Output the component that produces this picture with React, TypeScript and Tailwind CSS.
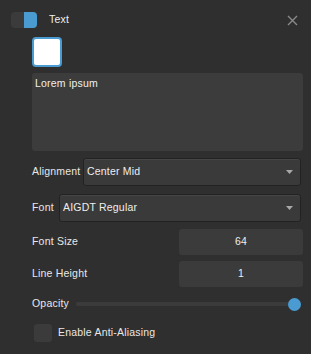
import React from 'react';

function Select({ value }: { value: string }) {
  return (
    <div className="flex-1 h-[28px] flex items-center justify-between pl-[3px] pr-[7px] bg-[#3a3a3a] border border-[#222] rounded-[3px] shadow-[inset_0_1px_0_#454545]">
      <span className="text-[10.5px] text-[#eee]">{value}</span>
      <svg width="7" height="4" viewBox="0 0 7 4">
        <path d="M0 0H7L3.5 4Z" fill="#a8a8a8" />
      </svg>
    </div>
  );
}

function NumberRow({ label, value }: { label: string; value: string }) {
  return (
    <div className="flex items-center h-[26px]">
      <span className="flex-1 text-[10.5px] text-[#e8e8e8]">{label}</span>
      <div className="w-[124px] h-full bg-[#3b3b3b] rounded-[3px] flex items-center justify-center text-[10.5px] text-[#eee]">
        {value}
      </div>
    </div>
  );
}

export default function App() {
  return (
    <div className="w-[311px] h-[354px] bg-[#2f2f2f] overflow-hidden font-['Liberation_Sans',Arial,sans-serif] tracking-[0.2px] select-none">
      <div className="flex items-center h-[16px] mt-[12px] pl-[11px] pr-[13px]">
        <div className="w-[26px] h-[16px] rounded-[4px] bg-[#3b3b3b] flex justify-end">
          <div className="w-[13px] h-full rounded-r-[4px] bg-[#4a9bd1]" />
        </div>
        <span className="ml-[12px] text-[10.5px] text-[#f0f0f0]">Text</span>
        <div className="flex-1" />
        <svg width="11" height="11" viewBox="0 0 11 11">
          <path d="M1 1L10 10M10 1L1 10" stroke="#8a8a8a" strokeWidth="1.4" />
        </svg>
      </div>

      <div className="pl-[32px] pr-[8px]">
        <div className="mt-[9px] w-[30px] h-[30px] rounded-[4px] border-2 border-[#4a9bd1] bg-white" />

        <div className="mt-[6px] h-[78px] bg-[#3c3c3c] rounded-[3px] px-[3px] pt-[3px] text-[10.5px] text-[#f0f0f0]">
          Lorem ipsum
        </div>

        <div className="mt-[7px] flex items-center pr-[2px]">
          <span className="w-[51px] shrink-0 text-[10.5px] text-[#e8e8e8]">Alignment</span>
          <Select value="Center Mid" />
        </div>

        <div className="mt-[8px] flex items-center pr-[2px]">
          <span className="w-[27px] shrink-0 text-[10.5px] text-[#e8e8e8]">Font</span>
          <Select value="AIGDT Regular" />
        </div>

        <div className="mt-[7px] flex flex-col gap-[6px]">
          <NumberRow label="Font Size" value="64" />
          <NumberRow label="Line Height" value="1" />
        </div>

        <div className="mt-[10px] flex items-center h-[14px] pr-[2px]">
          <span className="w-[44px] shrink-0 text-[10.5px] text-[#e8e8e8]">Opacity</span>
          <div className="flex-1 relative h-[14px] flex items-center">
            <div className="w-full h-[4px] rounded-full bg-[#3b3b3b]" />
            <div className="absolute right-0 w-[13px] h-[13px] rounded-full bg-[#4a9bd1]" />
          </div>
        </div>

        <div className="mt-[13px] flex items-center pl-[2px]">
          <div className="w-[18px] h-[18px] rounded-[3px] bg-[#3b3b3b]" />
          <span className="ml-[6px] text-[10.5px] text-[#e8e8e8]">Enable Anti-Aliasing</span>
        </div>
      </div>
    </div>
  );
}
